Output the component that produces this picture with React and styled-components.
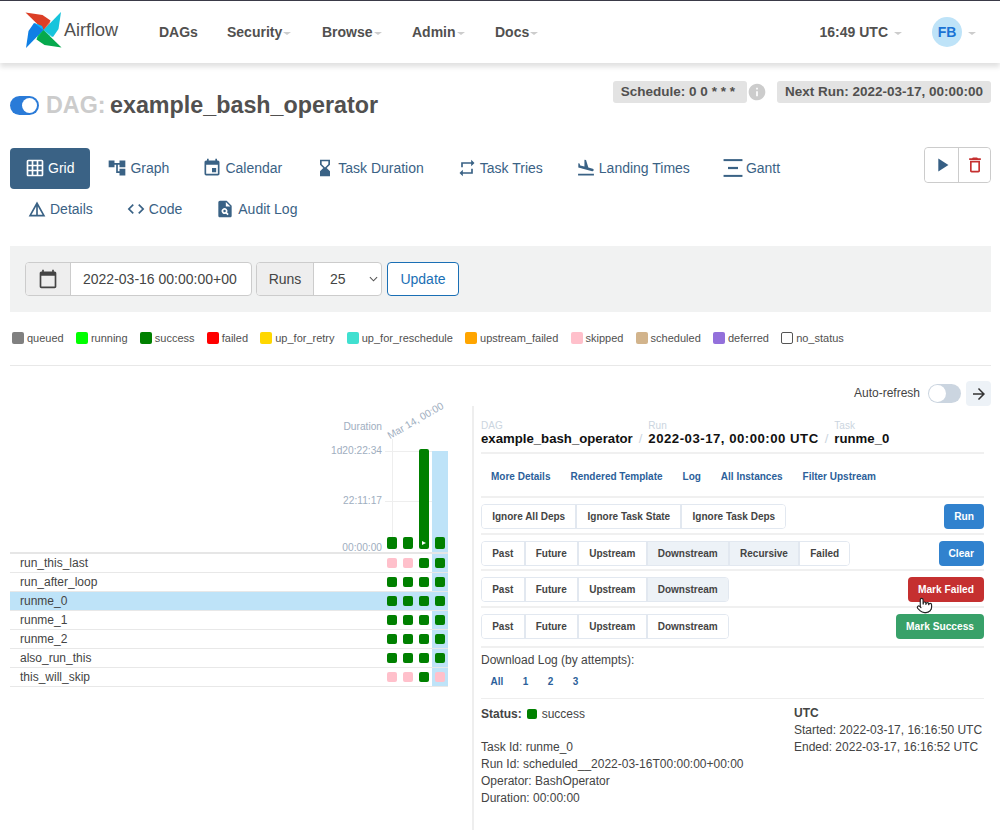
import React from 'react';
import styled, { createGlobalStyle } from 'styled-components';
import {
  MdGridOn, MdAccountTree, MdEvent, MdHourglassBottom, MdRepeat, MdFlightLand,
  MdDetails, MdCode, MdPlagiarism, MdPlayArrow, MdDeleteOutline, MdInfo, MdCalendarToday, MdArrowForward,
} from 'react-icons/md';
import { Pointer } from 'lucide-react';

const GlobalStyle = createGlobalStyle`
  html, body { margin: 0; padding: 0; background: #fff; }
  body {
    font-family: "Liberation Sans", Arial, sans-serif;
    color: #51504f;
    height: 830px;
    overflow: hidden;
  }
  * { box-sizing: border-box; }
`;

const NAV_ITEMS = [
  { label: 'DAGs', width: 68 },
  { label: 'Security', caret: true, width: 95 },
  { label: 'Browse', caret: true, width: 90 },
  { label: 'Admin', caret: true, width: 83 },
  { label: 'Docs', caret: true, width: 60 },
];

const LEGEND = [
  ['queued', 'gray'], ['running', 'lime'], ['success', 'green'], ['failed', 'red'],
  ['up_for_retry', 'gold'], ['up_for_reschedule', 'turquoise'], ['upstream_failed', 'orange'],
  ['skipped', 'pink'], ['scheduled', 'tan'], ['deferred', 'mediumpurple'], ['no_status', 'white'],
];

const GanttIcon = ({ size }) => (
  <svg viewBox="0 0 18 18" width={size} height={size} fill="currentColor">
    <rect x="0.5" y="1" width="17" height="1.8" />
    <rect x="4.5" y="8" width="9" height="2" />
    <rect x="0.5" y="15.2" width="17" height="1.8" />
  </svg>
);

const TABS_ONE = [
  { label: 'Grid', icon: MdGridOn, active: true },
  { label: 'Graph', icon: MdAccountTree },
  { label: 'Calendar', icon: MdEvent },
  { label: 'Task Duration', icon: MdHourglassBottom },
  { label: 'Task Tries', icon: MdRepeat },
  { label: 'Landing Times', icon: MdFlightLand },
  { label: 'Gantt', icon: GanttIcon },
];

const TABS_TWO = [
  { label: 'Details', icon: MdDetails },
  { label: 'Code', icon: MdCode },
  { label: 'Audit Log', icon: MdPlagiarism },
];

const G = 'green';
const P = 'pink';
const TASKS = [
  { name: 'run_this_last', runs: [P, P, G, G] },
  { name: 'run_after_loop', runs: [G, G, G, G] },
  { name: 'runme_0', runs: [G, G, G, G], selected: true },
  { name: 'runme_1', runs: [G, G, G, G] },
  { name: 'runme_2', runs: [G, G, G, G] },
  { name: 'also_run_this', runs: [G, G, G, G] },
  { name: 'this_will_skip', runs: [P, P, G, P] },
];

const ACTIONS = [
  { options: [['Ignore All Deps'], ['Ignore Task State'], ['Ignore Task Deps']], label: 'Run', color: '#3182ce' },
  {
    options: [['Past'], ['Future'], ['Upstream'], ['Downstream', true], ['Recursive', true], ['Failed']],
    label: 'Clear',
    color: '#3182ce',
  },
  { options: [['Past'], ['Future'], ['Upstream'], ['Downstream', true]], label: 'Mark Failed', color: '#c53030', hand: true },
  { options: [['Past'], ['Future'], ['Upstream'], ['Downstream']], label: 'Mark Success', color: '#38a169', last: true },
];

const App = () => (
  <>
    <GlobalStyle />
    <Navbar>
      <Logo>
        <svg viewBox="0 0 36 36" width="37" height="36">
          {[
            ['#dc3f26', '#f2826a', 0],
            ['#17c4dc', '#7ae3ee', 90],
            ['#05a94d', '#04d659', 180],
            ['#0f7fe5', '#0cb6ff', 270],
          ].map(([dark, light, angle]) => (
            <g key={angle} transform={`rotate(${angle} 18 18)`}>
              <path d="M0 .5 17 3l8 5.5-3 8-4 1.5z" fill={dark} />
              <path d="M18 18 25 8.5l-3 8z" fill={light} />
            </g>
          ))}
        </svg>
        <LogoText>Airflow</LogoText>
      </Logo>
      <NavLinks>
        {NAV_ITEMS.map((item) => (
          <NavLink key={item.label} $width={item.width}>
            {item.label}
            {item.caret && <Caret />}
          </NavLink>
        ))}
      </NavLinks>
      <NavRight>
        <Clock>16:49 UTC<Caret $wide /></Clock>
        <Avatar>FB</Avatar>
        <Caret $wide />
      </NavRight>
    </Navbar>

    <Main>
      <TitleRow>
        <Title>
          <PauseToggle />
          <TitleMuted>DAG:</TitleMuted> example_bash_operator
        </Title>
        <Badges>
          <Badge>Schedule: 0 0 * * *</Badge>
          <InfoIcon />
          <Badge $next>Next Run: 2022-03-17, 00:00:00</Badge>
        </Badges>
      </TitleRow>

      <TabBar>
        <TabRows>
          <TabRow>
            {TABS_ONE.map(({ label, icon: Icon, active }) => (
              <Tab key={label} $active={active}><Icon size={20} />{label}</Tab>
            ))}
          </TabRow>
          <TabRow $indent>
            {TABS_TWO.map(({ label, icon: Icon }) => (
              <Tab key={label}><Icon size={20} />{label}</Tab>
            ))}
          </TabRow>
        </TabRows>
        <DagActions>
          <DagAction><MdPlayArrow size={22} color="#365f84" /></DagAction>
          <DagAction><MdDeleteOutline size={20} color="#c53030" /></DagAction>
        </DagActions>
      </TabBar>

      <FilterBar>
        <InputGroup $width={227}>
          <Addon $width={45}><MdCalendarToday size={20} color="#444" /></Addon>
          <InputValue>2022-03-16 00:00:00+00</InputValue>
        </InputGroup>
        <InputGroup $width={126}>
          <Addon $width={57}>Runs</Addon>
          <InputValue $select>25<SelectArrow viewBox="0 0 10 6"><path d="M1 1l4 4 4-4" /></SelectArrow></InputValue>
        </InputGroup>
        <UpdateButton>Update</UpdateButton>
      </FilterBar>

      <Legend>
        {LEGEND.map(([name, color]) => (
          <LegendItem key={name}>
            <LegendBox $color={color} />
            {name}
          </LegendItem>
        ))}
      </Legend>

      <Divider />

      <RefreshRow>
        <RefreshLabel>Auto-refresh</RefreshLabel>
        <RefreshSwitch />
        <ArrowButton><MdArrowForward size={18} /></ArrowButton>
      </RefreshRow>

      <Split>
        <GridPane>
          <ChartHead>
            <DurationLabel>Duration</DurationLabel>
            <DateLabel>Mar 14, 00:00</DateLabel>
          </ChartHead>
          <Chart>
            <GridLine $y={0} />
            <GridLine $y={50} />
            <DateLine />
            <Axis>
              <AxisLabel $gap={37}>1d20:22:34</AxisLabel>
              <AxisLabel $gap={34}>22:11:17</AxisLabel>
              <AxisLabel>00:00:00</AxisLabel>
            </Axis>
            <BarCol><Bar $height={12} /></BarCol>
            <BarCol><Bar $height={12} /></BarCol>
            <BarCol>
              <Bar $height={100}>
                <PlayMark viewBox="0 0 4 4"><path d="M0 0l4 2-4 2z" /></PlayMark>
              </Bar>
            </BarCol>
            <BarCol $current><Bar $height={12} /></BarCol>
          </Chart>
          {TASKS.map((task) => (
            <TaskRow key={task.name} $selected={task.selected}>
              <TaskName>{task.name}</TaskName>
              {task.runs.map((color, i) => (
                <TaskCell key={i} $current={i === 3}><Square $color={color} /></TaskCell>
              ))}
            </TaskRow>
          ))}
        </GridPane>

        <DetailPane>
          <Crumbs>
            <Crumb>
              <CrumbLabel>DAG</CrumbLabel>
              <CrumbValue>example_bash_operator</CrumbValue>
            </Crumb>
            <CrumbSep>/</CrumbSep>
            <Crumb>
              <CrumbLabel>Run</CrumbLabel>
              <CrumbValue $tracked>2022-03-17, 00:00:00 UTC</CrumbValue>
            </Crumb>
            <CrumbSep>/</CrumbSep>
            <Crumb>
              <CrumbLabel>Task</CrumbLabel>
              <CrumbValue>runme_0</CrumbValue>
            </Crumb>
          </Crumbs>

          <LinkRow>
            {['More Details', 'Rendered Template', 'Log', 'All Instances', 'Filter Upstream'].map((l) => (
              <TextLink key={l}>{l}</TextLink>
            ))}
          </LinkRow>

          {ACTIONS.map((row) => (
            <ActionRow key={row.label} $last={row.last}>
              <ButtonGroup>
                {row.options.map(([label, on]) => (
                  <OptionButton key={label} $on={on}>{label}</OptionButton>
                ))}
              </ButtonGroup>
              <SolidButton $color={row.color}>
                {row.label}
                {row.hand && <HandCursor><Pointer size={17} color="#222" fill="#fff" strokeWidth={1.6} /></HandCursor>}
              </SolidButton>
            </ActionRow>
          ))}

          <DownloadTitle>Download Log (by attempts):</DownloadTitle>
          <AttemptRow>
            <AttemptLink $width={32}>All</AttemptLink>
            <AttemptLink $width={25}>1</AttemptLink>
            <AttemptLink $width={25}>2</AttemptLink>
            <AttemptLink $width={25}>3</AttemptLink>
          </AttemptRow>

          <InfoGrid>
            <InfoColumn>
              <StatusLine><StatusKey>Status:</StatusKey><Square $color="green" /><StatusValue>success</StatusValue></StatusLine>
              <InfoSpacer />
              <InfoLine>Task Id: runme_0</InfoLine>
              <InfoLine>Run Id: scheduled__2022-03-16T00:00:00+00:00</InfoLine>
              <InfoLine>Operator: BashOperator</InfoLine>
              <InfoLine>Duration: 00:00:00</InfoLine>
            </InfoColumn>
            <InfoColumn>
              <InfoLine><strong>UTC</strong></InfoLine>
              <InfoLine>Started: 2022-03-17, 16:16:50 UTC</InfoLine>
              <InfoLine>Ended: 2022-03-17, 16:16:52 UTC</InfoLine>
            </InfoColumn>
          </InfoGrid>
        </DetailPane>
      </Split>
    </Main>
  </>
);

export default App;

const Navbar = styled.header`
  display: flex;
  align-items: center;
  height: 63px;
  border-top: 1px solid #3a3a48;
  padding: 0 24px 0 25px;
  background: #fff;
  box-shadow: 0 4px 5px rgba(0, 0, 0, 0.12);
`;

const Logo = styled.div`
  display: flex;
  align-items: center;
  width: 134px;
  margin-top: -4px;
`;

const LogoText = styled.span`
  font-size: 18px;
  color: #51504f;
  margin-left: 2px;
`;

const NavLinks = styled.nav`
  display: flex;
`;

const NavLink = styled.div`
  width: ${(p) => p.$width}px;
  font-size: 14px;
  font-weight: bold;
  display: flex;
  align-items: center;
`;

const Caret = styled.i`
  display: inline-block;
  width: 0;
  height: 0;
  margin-left: ${(p) => (p.$wide ? 6 : 1)}px;
  margin-top: 3px;
  border-top: 3px solid #ccc;
  border-left: 4px solid transparent;
  border-right: 4px solid transparent;
`;

const NavRight = styled.div`
  margin-left: auto;
  display: flex;
  align-items: center;
`;

const Clock = styled.div`
  font-size: 14px;
  font-weight: bold;
  display: flex;
  align-items: center;
  margin-right: 30px;
`;

const Avatar = styled.div`
  width: 30px;
  height: 30px;
  border-radius: 50%;
  background: #bee3f8;
  color: #1a73d4;
  font-size: 14px;
  font-weight: bold;
  display: flex;
  align-items: center;
  justify-content: center;
`;

const Main = styled.main`
  padding: 0 9px 0 10px;
`;

const TitleRow = styled.div`
  display: flex;
  justify-content: space-between;
  align-items: flex-start;
  padding-top: 18px;
  height: 85px;
`;

const Title = styled.h1`
  display: flex;
  align-items: center;
  margin: 11px 0 0;
  font-size: 23.3px;
  line-height: 26px;
  font-weight: bold;
  color: #51504f;
  white-space: pre;
`;

const PauseToggle = styled.span`
  width: 29px;
  height: 19px;
  border-radius: 10px;
  background: #2a7bd8;
  margin-right: 7px;
  position: relative;
  &::after {
    content: '';
    position: absolute;
    right: 2px;
    top: 2px;
    width: 15px;
    height: 15px;
    border-radius: 50%;
    background: #fff;
  }
`;

const TitleMuted = styled.span`
  color: #ccc;
  margin-right: -2px;
`;

const Badges = styled.div`
  display: flex;
  align-items: center;
`;

const Badge = styled.span`
  height: 22px;
  padding: 0 ${(p) => (p.$next ? 8 : 12)}px 0 8px;
  border-radius: 3px;
  background: #e3e3e3;
  font-size: 13.5px;
  font-weight: bold;
  line-height: 22px;
  margin-left: ${(p) => (p.$next ? 10 : 0)}px;
`;

const InfoIcon = styled(MdInfo)`
  width: 20px;
  height: 20px;
  color: #ccc;
`;

const TabBar = styled.div`
  display: flex;
  justify-content: space-between;
  align-items: flex-start;
`;

const TabRows = styled.div`
  display: flex;
  flex-direction: column;
`;

const TabRow = styled.div`
  display: flex;
  height: 41px;
  gap: 3px;
  padding-left: ${(p) => (p.$indent ? 2 : 0)}px;
`;

const Tab = styled.a`
  display: flex;
  align-items: center;
  gap: 3px;
  padding: 0 ${(p) => (p.$active ? 16 : 15)}px 1px 15px;
  margin-right: ${(p) => (p.$active ? -1 : 0)}px;
  font-size: 14px;
  border-radius: 4px;
  color: ${(p) => (p.$active ? '#fff' : '#3a6285')};
  background: ${(p) => (p.$active ? '#3a6285' : 'transparent')};
`;

const DagActions = styled.div`
  display: flex;
  height: 36px;
  margin-top: -1px;
  border: 1px solid #ccc;
  border-radius: 4px;
`;

const DagAction = styled.button`
  width: 33px;
  padding: 0;
  display: flex;
  align-items: center;
  justify-content: center;
  background: #fff;
  border: none;
  border-radius: 4px;
  & + & {
    width: 32px;
    border-left: 1px solid #ccc;
    border-radius: 0 4px 4px 0;
  }
`;

const FilterBar = styled.div`
  display: flex;
  align-items: center;
  gap: 4px;
  height: 66px;
  margin-top: 16px;
  padding-left: 15px;
  background: #f1f2f2;
`;

const InputGroup = styled.div`
  display: flex;
  width: ${(p) => p.$width}px;
  height: 34px;
  border: 1px solid #ccc;
  border-radius: 4px;
  background: #fff;
  font-size: 14px;
  color: #444;
  overflow: hidden;
`;

const Addon = styled.div`
  width: ${(p) => p.$width}px;
  display: flex;
  align-items: center;
  justify-content: center;
  background: #eee;
  border-right: 1px solid #ccc;
`;

const InputValue = styled.div`
  flex: 1;
  display: flex;
  align-items: center;
  padding-left: ${(p) => (p.$select ? 16 : 12)}px;
  justify-content: ${(p) => (p.$select ? 'space-between' : 'flex-start')};
`;

const SelectArrow = styled.svg`
  width: 9px;
  height: 6px;
  margin-right: 3px;
  fill: none;
  stroke: #555;
  stroke-width: 1.2;
`;

const UpdateButton = styled.button`
  width: 72px;
  height: 34px;
  margin-left: 1px;
  padding: 0;
  background: #fff;
  border: 1px solid #1a6fb5;
  border-radius: 4px;
  color: #1a6fb5;
  font: 14px "Liberation Sans", Arial, sans-serif;
`;

const Legend = styled.div`
  display: flex;
  gap: 12.2px;
  margin-top: 19px;
  padding-left: 2px;
  height: 14px;
`;

const LegendItem = styled.span`
  display: flex;
  align-items: center;
  gap: 3px;
  font-size: 11px;
  color: #51504f;
`;

const LegendBox = styled.i`
  width: 12px;
  height: 12px;
  border-radius: 2px;
  background: ${(p) => p.$color};
  border: ${(p) => (p.$color === 'white' ? '1px solid #555' : 'none')};
`;

const Divider = styled.hr`
  height: 1px;
  margin: 20px 0 0;
  border: none;
  background: #e8e8e8;
`;

const RefreshRow = styled.div`
  display: flex;
  align-items: center;
  justify-content: flex-end;
  height: 25px;
  margin-top: 15px;
  font-size: 12px;
  color: #444;
`;

const RefreshLabel = styled.span`
  padding-bottom: 2px;
`;

const RefreshSwitch = styled.span`
  position: relative;
  width: 33px;
  height: 19px;
  margin-left: 8px;
  border-radius: 10px;
  background: #cbd5e0;
  &::after {
    content: '';
    position: absolute;
    left: 1px;
    top: 1px;
    width: 17px;
    height: 17px;
    border-radius: 50%;
    background: #fff;
  }
`;

const ArrowButton = styled.span`
  width: 25px;
  height: 25px;
  margin-left: 5px;
  border-radius: 4px;
  background: #edf2f7;
  color: #333;
  display: flex;
  align-items: center;
  justify-content: center;
`;

const Split = styled.div`
  display: flex;
`;

const GridPane = styled.section`
  width: 464px;
  flex-shrink: 0;
  height: 424px;
  border-right: 2px solid #eee;
  padding-right: 24px;
`;

const ChartHead = styled.div`
  position: relative;
  height: 45px;
`;

const DurationLabel = styled.span`
  position: absolute;
  right: 66px;
  top: 15px;
  font-size: 10.2px;
  color: #a0aec0;
`;

const DateLabel = styled.span`
  position: absolute;
  left: 374px;
  top: 9px;
  font-size: 10.2px;
  color: #a0aec0;
  white-space: nowrap;
  transform: rotate(-30deg);
`;

const Chart = styled.div`
  position: relative;
  display: flex;
  height: 103px;
  border-bottom: 2px solid #e6e6e6;
`;

const GridLine = styled.i`
  position: absolute;
  left: 375px;
  right: 16px;
  top: ${(p) => p.$y}px;
  height: 1px;
  background: #eee;
`;

const DateLine = styled.i`
  position: absolute;
  left: 382px;
  top: -12px;
  bottom: 8px;
  width: 1px;
  background: #eee;
`;

const Axis = styled.div`
  flex: 1;
  margin-top: -7px;
  padding-right: 2px;
  display: flex;
  flex-direction: column;
  align-items: flex-end;
`;

const AxisLabel = styled.span`
  font-size: 10.2px;
  line-height: 13px;
  color: #a0aec0;
  margin-bottom: ${(p) => p.$gap || 0}px;
`;

const BarCol = styled.div`
  position: relative;
  width: 16px;
  display: flex;
  align-items: flex-end;
  justify-content: center;
  padding-bottom: 3px;
  background: ${(p) => (p.$current ? '#bee3f8' : 'transparent')};
`;

const Bar = styled.div`
  position: relative;
  width: 10px;
  height: ${(p) => p.$height}px;
  border-radius: 2px;
  background: green;
`;

const PlayMark = styled.svg`
  position: absolute;
  left: 3px;
  bottom: 4px;
  width: 4px;
  height: 4px;
  fill: #fff;
`;

const TaskRow = styled.div`
  display: flex;
  height: 19px;
  border-bottom: 1px solid #e8e8e8;
  background: ${(p) => (p.$selected ? '#bee3f8' : 'transparent')};
`;

const TaskName = styled.div`
  flex: 1;
  padding-left: 10px;
  font-size: 12px;
  line-height: 18px;
  color: #444;
`;

const TaskCell = styled.div`
  width: 16px;
  display: flex;
  align-items: center;
  justify-content: center;
  background: ${(p) => (p.$current ? '#bee3f8' : 'transparent')};
`;

const Square = styled.i`
  display: block;
  width: 10px;
  height: 10px;
  border-radius: 2px;
  background: ${(p) => p.$color};
`;

const DetailPane = styled.section`
  flex: 1;
  min-width: 0;
  padding: 16px 7px 0 7px;
`;

const Crumbs = styled.div`
  display: flex;
  align-items: flex-end;
  height: 32px;
  border-bottom: 2px solid #f0f0f0;
`;

const Crumb = styled.div`
  display: flex;
  flex-direction: column;
  padding-bottom: 6px;
`;

const CrumbLabel = styled.span`
  font-size: 10px;
  line-height: 11px;
  color: #cbd5e0;
`;

const CrumbValue = styled.span`
  font-size: 13.2px;
  line-height: 15px;
  font-weight: bold;
  color: #111;
  white-space: nowrap;
  letter-spacing: ${(p) => (p.$tracked ? 0.5 : 0)}px;
`;

const CrumbSep = styled.span`
  padding: 0 6px 6px;
  font-size: 13px;
  line-height: 15px;
  color: #cbd5e0;
`;

const LinkRow = styled.div`
  display: flex;
  align-items: center;
  height: 44px;
  padding-top: 2px;
  border-bottom: 2px solid #f0f0f0;
`;

const TextLink = styled.a`
  padding: 0 10px;
  font-size: 10px;
  font-weight: bold;
  color: #2c5f9a;
`;

const ActionRow = styled.div`
  display: flex;
  justify-content: space-between;
  align-items: flex-start;
  height: ${(p) => (p.$last ? 40 : 36.7)}px;
  padding-top: 6px;
  border-bottom: 2px solid #f0f0f0;
`;

const ButtonGroup = styled.div`
  display: flex;
  height: 25px;
  border: 1px solid #e2e8f0;
  border-radius: 4px;
  overflow: hidden;
`;

const OptionButton = styled.span`
  display: flex;
  align-items: center;
  padding: 0 10.2px;
  font-size: 10px;
  font-weight: bold;
  color: #444;
  background: ${(p) => (p.$on ? '#edf2f7' : '#fff')};
  & + & {
    border-left: 2px solid #e2e8f0;
  }
`;

const SolidButton = styled.span`
  position: relative;
  display: flex;
  align-items: center;
  height: 25px;
  padding: 0 10px;
  border-radius: 4px;
  font-size: 10.2px;
  font-weight: bold;
  color: #fff;
  background: ${(p) => p.$color};
`;

const HandCursor = styled.span`
  position: absolute;
  left: 8px;
  top: 20px;
  line-height: 0;
`;

const DownloadTitle = styled.div`
  margin-top: 5px;
  font-size: 12px;
  line-height: 14px;
  color: #444;
`;

const AttemptRow = styled.div`
  display: flex;
  align-items: center;
  height: 32px;
  padding-bottom: 3px;
  border-bottom: 1px solid #eee;
`;

const AttemptLink = styled.a`
  width: ${(p) => p.$width}px;
  text-align: center;
  font-size: 10px;
  font-weight: bold;
  color: #2c5f9a;
`;

const InfoGrid = styled.div`
  display: grid;
  grid-template-columns: 313px 1fr;
  padding-top: 6px;
`;

const InfoColumn = styled.div`
  display: flex;
  flex-direction: column;
`;

const StatusLine = styled.div`
  display: flex;
  align-items: center;
  height: 17px;
  font-size: 12px;
  color: #444;
`;

const StatusKey = styled.strong`
  margin-right: 5px;
`;

const StatusValue = styled.span`
  margin-left: 5px;
`;

const InfoSpacer = styled.div`
  height: 17px;
`;

const InfoLine = styled.div`
  font-size: 12px;
  line-height: 17px;
  color: #444;
`;
